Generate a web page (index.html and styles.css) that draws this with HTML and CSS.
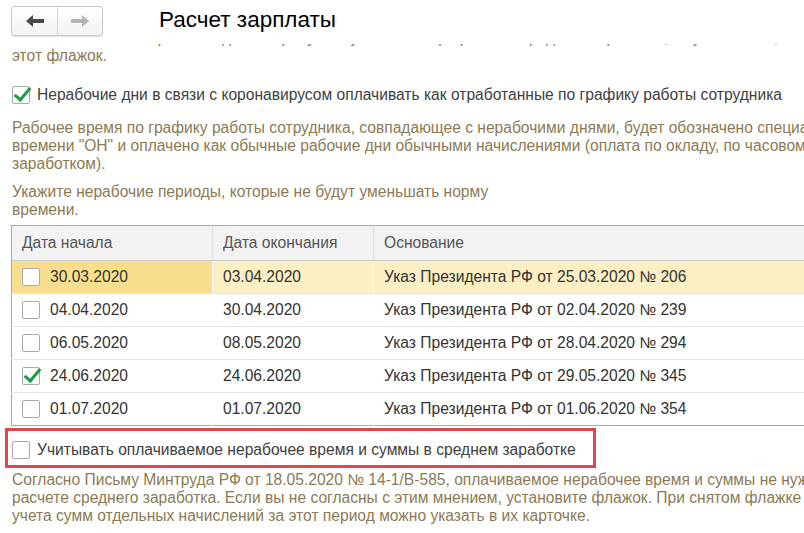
FILE: index.html
```html
<!DOCTYPE html>
<html lang="ru">
<head>
  <meta charset="UTF-8" />
  <title>Расчет зарплаты</title>
  <link rel="stylesheet" href="styles.css">
</head>
<body>

<div class="topbar">
  <div class="nav-group">
    <button class="nav-btn">
      <svg width="18" height="12" viewBox="0 0 18 12"><path d="M0 6 L7 0 L7 4 L18 4 L18 8 L7 8 L7 12 Z" fill="#4a4a4a"/></svg>
    </button>
    <button class="nav-btn">
      <svg width="18" height="12" viewBox="0 0 18 12"><path d="M18 6 L11 0 L11 4 L0 4 L0 8 L11 8 L11 12 Z" fill="#b4b4b4"/></svg>
    </button>
  </div>
  <h1 class="title">Расчет зарплаты</h1>
</div>

<div class="content">
  <p class="hint hint-cut">Если выплаты за нерабочие дни не требуется учитывать при расчете среднего заработка, то установите,<br>этот флажок.</p>

  <label class="check-row">
    <span class="checkbox checked"></span>
    Нерабочие дни в связи с коронавирусом оплачивать как отработанные по графику работы сотрудника
  </label>

  <p class="hint hint-wide">Рабочее время по графику работы сотрудника, совпадающее с нерабочими днями, будет обозначено специальным видом<br>времени "ОН" и оплачено как обычные рабочие дни обычными начислениями (оплата по окладу, по часовому тарифу, средним<br>заработком).</p>

  <p class="hint hint-periods">Укажите нерабочие периоды, которые не будут уменьшать норму<br>времени.</p>

  <table class="periods">
    <thead>
      <tr>
        <th class="col-start">Дата начала</th>
        <th class="col-end">Дата окончания</th>
        <th>Основание</th>
      </tr>
    </thead>
    <tbody>
      <tr class="selected">
        <td class="current"><span class="cell-check"><span class="checkbox"></span>30.03.2020</span></td>
        <td>03.04.2020</td>
        <td>Указ Президента РФ от 25.03.2020 № 206</td>
      </tr>
      <tr>
        <td><span class="cell-check"><span class="checkbox"></span>04.04.2020</span></td>
        <td>30.04.2020</td>
        <td>Указ Президента РФ от 02.04.2020 № 239</td>
      </tr>
      <tr>
        <td><span class="cell-check"><span class="checkbox"></span>06.05.2020</span></td>
        <td>08.05.2020</td>
        <td>Указ Президента РФ от 28.04.2020 № 294</td>
      </tr>
      <tr>
        <td><span class="cell-check"><span class="checkbox checked"></span>24.06.2020</span></td>
        <td>24.06.2020</td>
        <td>Указ Президента РФ от 29.05.2020 № 345</td>
      </tr>
      <tr>
        <td><span class="cell-check"><span class="checkbox"></span>01.07.2020</span></td>
        <td>01.07.2020</td>
        <td>Указ Президента РФ от 01.06.2020 № 354</td>
      </tr>
    </tbody>
  </table>

  <div class="highlight">
    <label class="check-row">
      <span class="checkbox"></span>
      Учитывать оплачиваемое нерабочее время и суммы в среднем заработке
    </label>
  </div>

  <p class="hint hint-bottom">Согласно Письму Минтруда РФ от 18.05.2020 № 14-1/В-585, оплачиваемое нерабочее время и суммы не нужно учитывать при<br>расчете среднего заработка. Если вы не согласны с этим мнением, установите флажок. При снятом флажке порядок<br>учета сумм отдельных начислений за этот период можно указать в их карточке.</p>
</div>

</body>
</html>
```

FILE: styles.css
```css
body {
  margin: 0;
  width: 804px;
  height: 533px;
  overflow: hidden;
  background: #fff;
  font-family: Arial, "Liberation Sans", sans-serif;
  font-size: 15.6px;
  color: #404040;
}

.topbar {
  display: flex;
  align-items: flex-start;
  height: 44px;
  padding: 6px 0 0 11px;
  box-sizing: border-box;
  background: #fff;
}

.nav-group {
  display: flex;
  height: 30px;
  border: 1px solid #c9c9c9;
  border-radius: 3px;
  background: linear-gradient(180deg, #ffffff 0%, #f2f2f2 100%);
  box-shadow: 0 1px 1px rgba(0, 0, 0, 0.12);
  box-sizing: border-box;
}

.nav-btn {
  display: flex;
  align-items: center;
  justify-content: center;
  width: 45px;
  height: 100%;
  padding: 0;
  border: none;
  background: transparent;
}

.nav-btn + .nav-btn {
  border-left: 1px solid #d6d6d6;
}

.title {
  margin: 1px 0 0 56px;
  font-size: 22.5px;
  line-height: 26px;
  font-weight: normal;
  color: #000;
}

.content {
  height: 489px;
  overflow: hidden;
}

.hint {
  margin: 0;
  padding-left: 12px;
  line-height: 18px;
  color: #8b7a55;
  white-space: nowrap;
}

.hint-cut {
  margin-top: -15px;
  padding-bottom: 1px;
}

.check-row {
  display: flex;
  align-items: center;
  height: 18px;
  padding-left: 12px;
  gap: 7px;
  white-space: nowrap;
}

.content > .check-row {
  margin-top: 20px;
}

.checkbox {
  position: relative;
  flex: none;
  width: 16px;
  height: 16px;
  border: 1px solid #a9a9a9;
  border-radius: 2px;
  background: #fff;
}

.checkbox.checked::after {
  content: "";
  position: absolute;
  left: 5px;
  top: -3px;
  width: 6px;
  height: 14px;
  border-right: 3px solid #1e9a48;
  border-bottom: 3px solid #1e9a48;
  transform: rotate(40deg);
}

.hint-wide {
  margin-top: 15px;
}

.hint-periods {
  margin-top: 10px;
}

.periods {
  margin: 6px 0 0 11px;
  width: 820px;
  border-collapse: collapse;
  border: 1px solid #a8a8a8;
  table-layout: fixed;
}

.periods th {
  height: 34px;
  padding: 0 10px;
  background: #f2f2f2;
  border-right: 1px solid #dcdcdc;
  border-bottom: 1px solid #c8c8c8;
  font-weight: normal;
  text-align: left;
  color: #555;
}

.periods .col-start {
  width: 180px;
}

.periods .col-end {
  width: 140px;
}

.periods td {
  height: 32px;
  padding: 0 10px;
  border-bottom: 1px solid #e3e3e3;
  border-right: 1px solid #fff;
  color: #333;
  white-space: nowrap;
}

.periods tbody tr:last-child td {
  border-bottom: none;
}

.periods tr.selected td {
  background: #fcefc4;
}

.periods tr.selected td.current {
  background: #f8df8d;
}

.cell-check {
  display: flex;
  align-items: center;
  gap: 10px;
}

.highlight {
  display: inline-block;
  margin: 2px 0 0 5px;
  padding: 9px 17px 5px 0;
  border: 3px solid #e0474c;
}

.highlight .check-row {
  padding-left: 4px;
  height: 20px;
}

.hint-bottom {
  margin-top: 3px;
}
```
